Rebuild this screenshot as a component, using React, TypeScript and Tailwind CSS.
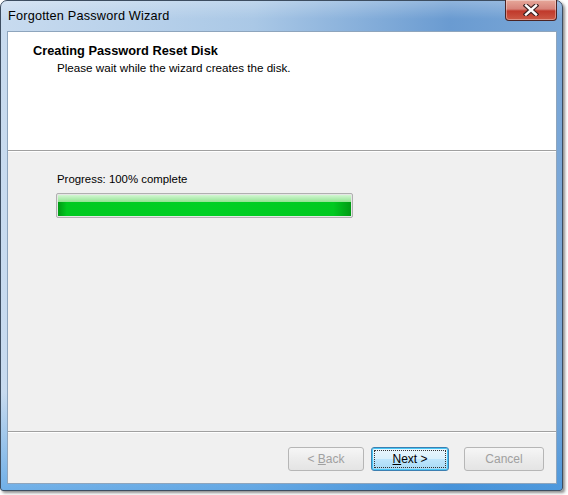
import React from "react";

const font = { fontFamily: '"Liberation Sans", Arial, sans-serif' };

function CloseX() {
  return (
    <svg width="16" height="12" viewBox="0 0 16 12">
      <path d="M3 1.5 L13 10.5 M13 1.5 L3 10.5" stroke="#3a2020" strokeWidth="4.6" strokeLinecap="square" />
      <path d="M3 1.5 L13 10.5 M13 1.5 L3 10.5" stroke="#ffffff" strokeWidth="2.4" strokeLinecap="square" />
    </svg>
  );
}

export default function App() {
  return (
    <div className="w-[568px] h-[495px] bg-white relative overflow-hidden" style={font}>
      <div className="w-[563px] h-[491px] flex flex-col rounded-t-[7px] rounded-b-[3px] border border-[#3d4d60] shadow-[2px_2px_3px_rgba(0,0,0,0.45)] bg-[linear-gradient(to_bottom,rgba(255,255,255,0)_80%,rgba(40,140,225,0.55)),linear-gradient(to_right,#c8dbef,#aac8e6_45%,#6a9bd1_80%,#7aa7d7)]">
        {/* Title bar */}
        <div className="h-[30px] relative flex items-start bg-[linear-gradient(to_bottom,rgba(255,255,255,0.25),rgba(255,255,255,0)_60%)] rounded-t-[6px]">
          <span className="text-[12.7px] text-black pl-[7px] pt-[8px] leading-[14px] tracking-[0.2px]">Forgotten Password Wizard</span>
          <div className="absolute right-[5px] top-[-1px] w-[52px] h-[21px] rounded-b-[4px] border border-[#4b2424] border-t-0 bg-[linear-gradient(to_bottom,#e6a89a,#d7837a_45%,#c0392b_55%,#cc5a46)] flex items-center justify-center shadow-[inset_0_0_0_1px_rgba(255,255,255,0.35)]">
            <CloseX />
          </div>
        </div>
        {/* Client */}
        <div className="flex-1 ml-[6px] mr-[5px] mb-[6px] border border-[#8ea5bd] flex flex-col bg-[#f0f0f0]">
          <div className="h-[119px] bg-white border-b border-[#a0a0a0] shadow-[0_1px_0_#ffffff]">
            <div className="pl-[25px] pt-[12px] text-[12.8px] font-bold text-black leading-[14px]">Creating Password Reset Disk</div>
            <div className="pl-[49px] pt-[3px] text-[11.65px] text-black leading-[14px]">Please wait while the wizard creates the disk.</div>
          </div>
          <div className="flex-1 pl-[48px] pt-[21px]">
            <div className="text-[11.4px] text-black leading-[14px] pl-[1px]">Progress: 100% complete</div>
            <div className="mt-[7px] w-[297px] h-[25px] border border-[#b0b0b0] rounded-[2px] bg-[#e6e6e6] p-[1px]">
              <div className="w-full h-full relative bg-[linear-gradient(to_right,#009a14,#00c920_3%,#00d024_50%,#00c920_94%,#009a14)]">
                <div className="absolute left-0 right-0 top-0 h-[7px] bg-[linear-gradient(to_bottom,#d2f7d2,#92e492)]" />
              </div>
            </div>
          </div>
          <div className="h-[52px] border-t border-[#a0a0a0] shadow-[inset_0_1px_0_#ffffff] flex items-start justify-end pt-[15px] pr-[12px]">
            <button className="w-[76px] h-[24px] rounded-[3px] border border-[#b6b6b6] bg-[linear-gradient(to_bottom,#f6f6f6,#ececec_50%,#e4e4e4)] text-[12px] text-[#a0a0a0] leading-none">
              &lt; <span className="underline">B</span>ack
            </button>
            <button className="ml-[7px] w-[78px] h-[24px] rounded-[3px] border border-[#3c7fb1] bg-[linear-gradient(to_bottom,#eaf6fd,#d9f0fc_50%,#bee6fd_51%,#a7d9f5)] shadow-[inset_0_0_0_1px_#48c6f5] p-[2px] text-[12px] text-black leading-none">
              <div className="w-full h-full border border-dotted border-[#333] flex items-center justify-center">
                <span><span className="underline">N</span>ext &gt;</span>
              </div>
            </button>
            <button className="ml-[15px] w-[80px] h-[24px] rounded-[3px] border border-[#b6b6b6] bg-[linear-gradient(to_bottom,#f6f6f6,#ececec_50%,#e4e4e4)] text-[12px] text-[#a0a0a0] leading-none">
              Cancel
            </button>
          </div>
        </div>
      </div>
    </div>
  );
}
